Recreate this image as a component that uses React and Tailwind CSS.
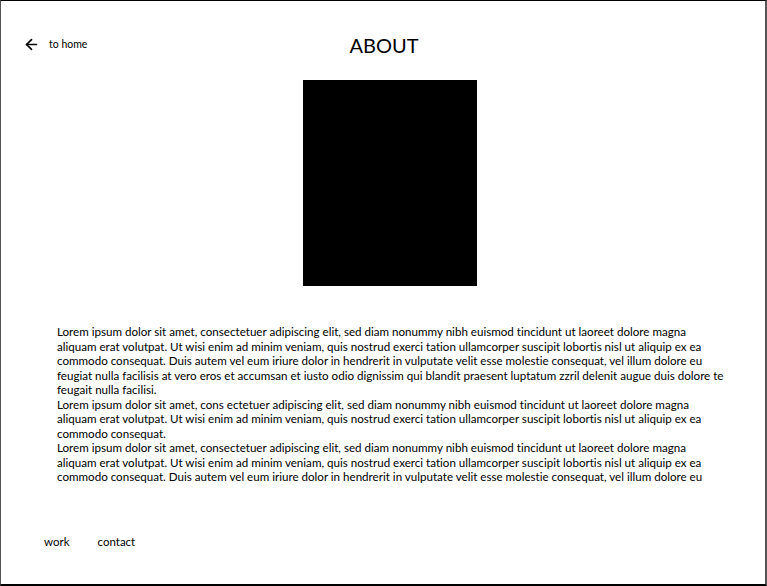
import { ArrowLeft } from "lucide-react";

const paragraphs = [
  [
    "Lorem ipsum dolor sit amet, consectetuer adipiscing elit, sed diam nonummy nibh euismod tincidunt ut laoreet dolore magna",
    "aliquam erat volutpat. Ut wisi enim ad minim veniam, quis nostrud exerci tation ullamcorper suscipit lobortis nisl ut aliquip ex ea",
    "commodo consequat. Duis autem vel eum iriure dolor in hendrerit in vulputate velit esse molestie consequat, vel illum dolore eu",
    "feugiat nulla facilisis at vero eros et accumsan et iusto odio dignissim qui blandit praesent luptatum zzril delenit augue duis dolore te",
    "feugait nulla facilisi.",
  ],
  [
    "Lorem ipsum dolor sit amet, cons ectetuer adipiscing elit, sed diam nonummy nibh euismod tincidunt ut laoreet dolore magna",
    "aliquam erat volutpat. Ut wisi enim ad minim veniam, quis nostrud exerci tation ullamcorper suscipit lobortis nisl ut aliquip ex ea",
    "commodo consequat.",
  ],
  [
    "Lorem ipsum dolor sit amet, consectetuer adipiscing elit, sed diam nonummy nibh euismod tincidunt ut laoreet dolore magna",
    "aliquam erat volutpat. Ut wisi enim ad minim veniam, quis nostrud exerci tation ullamcorper suscipit lobortis nisl ut aliquip ex ea",
    "commodo consequat. Duis autem vel eum iriure dolor in hendrerit in vulputate velit esse molestie consequat, vel illum dolore eu",
  ],
];

export default function App() {
  return (
    <div
      className="w-[767px] h-[586px] bg-white text-black border-t border-l border-r-2 border-b-2 border-l-[#555] border-r-[#555] border-t-black border-b-black flex flex-col [font-variant-ligatures:none]"
      style={{ fontFamily: '"Lato", "Open Sans", sans-serif' }}
    >
      {/* header */}
      <div className="relative h-[79px] flex items-center justify-center">
        <a href="#" className="absolute left-[22px] top-[35px] flex items-center gap-[9px] text-[10.5px]">
          <ArrowLeft size={17} strokeWidth={2.4} />
          <span>to home</span>
        </a>
        <h1 className="text-[20px] mt-[8px] ml-[2px]">ABOUT</h1>
      </div>

      <div className="flex justify-center">
        <div className="w-[174px] h-[206px] bg-black ml-[13px]" />
      </div>

      <div className="pl-[56px] pt-[39px] text-[11.6px] leading-[14.5px]">
        {paragraphs.map((lines, i) => (
          <p key={i}>
            {lines.map((line, j) => (
              <span key={j} className="block whitespace-nowrap">
                {line}
              </span>
            ))}
          </p>
        ))}
      </div>

      <nav className="mt-auto mb-[34px] pl-[43px] flex gap-[28px] text-[11.5px]">
        <a href="#">work</a>
        <a href="#">contact</a>
      </nav>
    </div>
  );
}
